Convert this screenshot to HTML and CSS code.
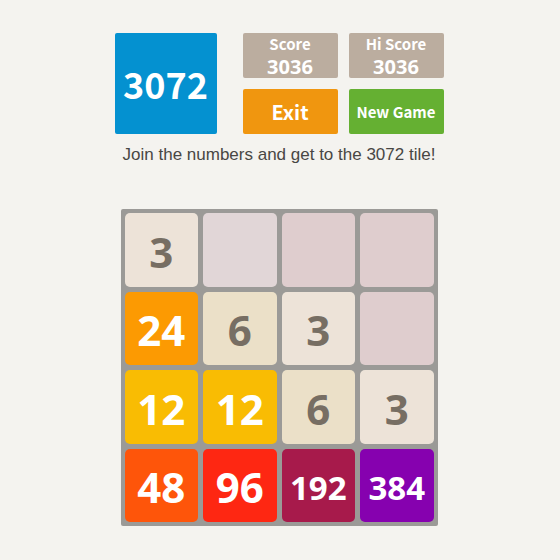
FILE: index.html
```html
<!DOCTYPE html>
<html lang="en">
<head>
<meta charset="utf-8">
<meta name="viewport" content="width=device-width, initial-scale=1">
<title>3072</title>
<link rel="stylesheet" href="styles.css">
</head>
<body>
<main class="game">
  <header class="header">
    <h1 class="logo">3072</h1>
    <div class="panel">
      <div class="score"><span class="score-label">Score</span><span class="score-value">3036</span></div>
      <div class="score"><span class="score-label">Hi Score</span><span class="score-value">3036</span></div>
      <button class="button exit" type="button">Exit</button>
      <button class="button new-game" type="button">New Game</button>
    </div>
  </header>
  <p class="intro">Join the numbers and get to the 3072 tile!</p>
  <section class="board" aria-label="Game board">
    <div class="tile t3">3</div>
    <div class="tile empty light"></div>
    <div class="tile empty"></div>
    <div class="tile empty"></div>
    <div class="tile t24">24</div>
    <div class="tile t6">6</div>
    <div class="tile t3">3</div>
    <div class="tile empty"></div>
    <div class="tile t12">12</div>
    <div class="tile t12">12</div>
    <div class="tile t6">6</div>
    <div class="tile t3">3</div>
    <div class="tile t48">48</div>
    <div class="tile t96">96</div>
    <div class="tile t192">192</div>
    <div class="tile t384">384</div>
  </section>
</main>
</body>
</html>
```
FILE: styles.css
```css
* {
  box-sizing: border-box;
}

body {
  margin: 0;
  background: #f4f3ef;
  font-family: "Noto Sans", sans-serif;
}

.game {
  display: flex;
  flex-direction: column;
  align-items: center;
  padding: 33px 17px 33px 15px;
}

.header {
  display: grid;
  grid-template-columns: 102fr 201fr;
  gap: 26px;
  width: 100%;
  max-width: 329px;
  font-family: "Noto Sans CJK SC", "Noto Sans", sans-serif;
}

.logo {
  display: flex;
  align-items: center;
  justify-content: center;
  margin: 0;
  padding-bottom: 2px;
  border-radius: 2px;
  background: #0491d0;
  color: #fff;
  font-size: 36px;
  font-weight: bold;
  line-height: 1;
}

.panel {
  display: grid;
  grid-template-columns: 1fr 1fr;
  gap: 11px;
}

.score,
.button {
  height: 45px;
  border-radius: 2px;
  color: #fff;
  font-weight: bold;
  text-align: center;
}

.score {
  display: flex;
  flex-direction: column;
  background: #bbad9f;
}

.score-label {
  font-size: 15px;
  line-height: 22px;
}

.score-value {
  font-family: "Noto Sans", sans-serif;
  font-size: 20px;
  line-height: 23px;
}

.button {
  padding: 0;
  border: 0;
  font-family: inherit;
}

.exit {
  background: #f0960f;
  font-size: 20px;
}

.new-game {
  background: #65b032;
  font-size: 15px;
}

.intro {
  margin: 11px 0 44px;
  color: #484744;
  font: 17px/20px "Liberation Sans", sans-serif;
}

.board {
  display: grid;
  grid-template-columns: repeat(4, 1fr);
  gap: 5px;
  width: 100%;
  max-width: 317px;
  padding: 4px;
  border-radius: 2px;
  background: #9b9a97;
}

.tile {
  display: flex;
  align-items: center;
  justify-content: center;
  aspect-ratio: 1;
  padding-top: 4px;
  border-radius: 5px;
  color: #fff;
  font-size: 42px;
  font-weight: bold;
  line-height: 1;
}

.empty {
  background: #dfcdce;
}

.light {
  background: #e1d6d7;
}

.t3 {
  background: #ede3d8;
  color: #776e63;
}

.t6 {
  background: #ebe0c8;
  color: #776e63;
}

.t12 {
  background: #f9bc03;
}

.t24 {
  background: #fc9a02;
}

.t48 {
  background: #fe550a;
}

.t96 {
  background: #fe2712;
}

.t192 {
  background: #a71a4b;
  font-size: 33px;
}

.t384 {
  background: #8601af;
  font-size: 33px;
}
```
